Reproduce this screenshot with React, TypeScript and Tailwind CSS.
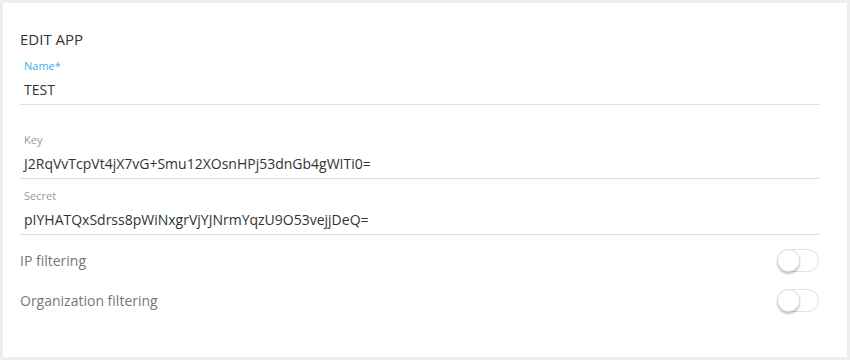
import { useState } from "react";

// Formulier om een app te bewerken: naam, sleutels en twee filter-schakelaars.
function Field({
  label,
  value,
  active,
  className,
}: {
  label: string;
  value: string;
  active?: boolean;
  className?: string;
}) {
  return (
    <div className={`border-b border-[#dddddd] px-1 pb-1 ${className ?? ""}`}>
      <div className={`text-[11px] leading-[15px] ${active ? "text-[#3eaeea]" : "text-[#9a9a9a]"}`}>{label}</div>
      <div className="mt-[7px] text-[14px] leading-[20px] text-[#333333]">{value}</div>
    </div>
  );
}

function Toggle({ initial = false, label }: { initial?: boolean; label: string }) {
  const [on, setOn] = useState(initial);
  return (
    <button
      type="button"
      aria-label={label}
      onClick={() => setOn(!on)}
      className={`relative h-[23px] w-[42px] rounded-full border border-[#e2e2e2] ${on ? "bg-[#3eaeea]" : "bg-white"}`}
    >
      <span
        className={`absolute top-[-1px] size-[23px] rounded-full border border-[#dcdcdc] bg-white shadow-[0_2px_2px_rgba(0,0,0,0.22)] ${on ? "right-[-1px]" : "left-[-1px]"}`}
      />
    </button>
  );
}

export default function App() {
  return (
    <div className="h-[360px] w-[850px] bg-[#eeeeee] p-[3px] font-['Open_Sans',sans-serif]">
      <div className="h-full bg-white pl-[17px] pr-[28px] pt-[26px]">
        <h1 className="text-[15px] leading-[20px] text-[#333333]">EDIT APP</h1>
        <Field className="mt-[9px]" label="Name*" value="TEST" active />
        <Field className="mt-[27px]" label="Key" value="J2RqVvTcpVt4jX7vG+Smu12XOsnHPj53dnGb4gWITi0=" />
        <Field className="mt-[9px]" label="Secret" value="pIYHATQxSdrss8pWiNxgrVjYJNrmYqzU9O53vejjDeQ=" />
        <div className="mt-[5px]">
          <div className="flex h-[40px] items-center justify-between">
            <span className="text-[14px] text-[#777777]">IP filtering</span>
            <Toggle label="IP filtering" />
          </div>
          <div className="flex h-[40px] items-center justify-between">
            <span className="text-[14px] text-[#777777]">Organization filtering</span>
            <Toggle label="Organization filtering" />
          </div>
        </div>
      </div>
    </div>
  );
}
